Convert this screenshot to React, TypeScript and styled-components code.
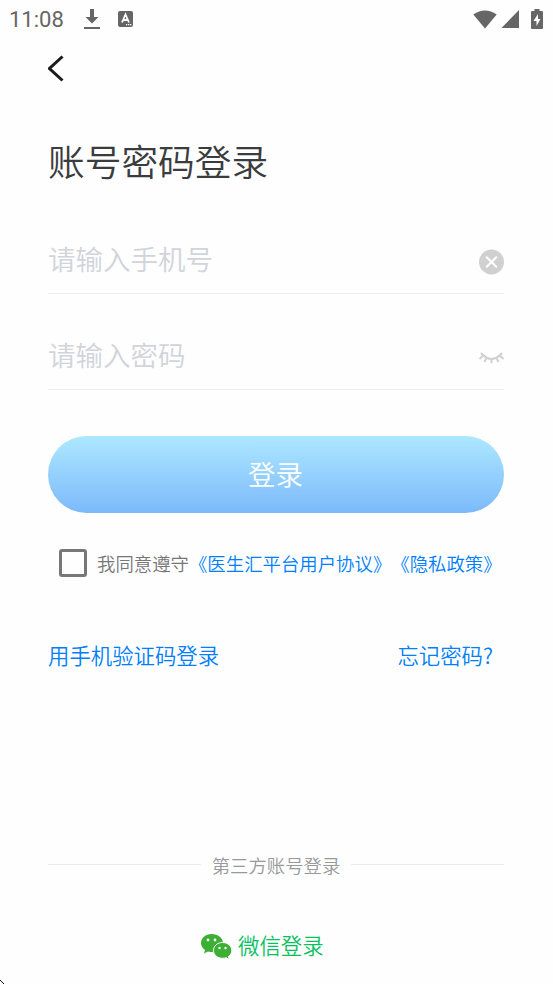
import React from 'react';
import styled, { createGlobalStyle } from 'styled-components';

const GlobalStyle = createGlobalStyle`
  * { box-sizing: border-box; }
  body {
    margin: 0;
    background: #fefefe;
    font-family: Roboto, 'Noto Sans CJK SC', sans-serif;
    font-weight: 350;
    text-spacing-trim: space-all;
  }
  button, input { font-family: inherit; font-weight: inherit; }
`;

const Screen = styled.main`
  position: relative;
  width: 553px;
  height: 984px;
  overflow: hidden;
  display: flex;
  flex-direction: column;
  background: #fefefe;
`;

const StatusBar = styled.header`
  height: 38px;
  flex: none;
  display: flex;
  align-items: center;
  justify-content: space-between;
  padding: 0 10px 0 9px;
  color: #666;
`;

const StatusGroup = styled.div`
  display: flex;
  align-items: center;
`;

const Clock = styled.span`
  width: 75px;
  font-size: 22px;
  font-weight: 400;
  line-height: 38px;
  padding-top: 1px;
`;

const Icon = styled.svg<{ $gap?: number }>`
  display: block;
  flex: none;
  margin-left: ${(p) => p.$gap ?? 0}px;
`;

const Content = styled.div`
  flex: 1;
  display: flex;
  flex-direction: column;
  padding: 0 49px 0 48px;
`;

const PlainButton = styled.button`
  border: 0;
  padding: 0;
  background: none;
  display: flex;
  align-items: center;
`;

const BackButton = styled(PlainButton)`
  height: 60px;
`;

const Title = styled.h1`
  margin: 39px 0 0;
  height: 51px;
  font-size: 36.7px;
  line-height: 54px;
  font-weight: 350;
  color: #3b3c3e;
`;

const Field = styled.label<{ $top: number }>`
  margin-top: ${(p) => p.$top}px;
  height: 68px;
  flex: none;
  display: flex;
  align-items: flex-start;
  justify-content: space-between;
  border-bottom: 1px solid #ededee;
`;

const Input = styled.input`
  flex: 1;
  min-width: 0;
  height: 67px;
  border: 0;
  padding: 1px 0 0;
  outline: 0;
  background: none;
  font-size: 27.5px;
  &::placeholder { color: #d1d4da; opacity: 1; }
`;

const FieldIcon = styled.span`
  height: 72px;
  display: flex;
  align-items: center;
`;

const LoginButton = styled.button`
  margin-top: 46px;
  height: 77px;
  flex: none;
  border: 0;
  border-radius: 39px;
  padding: 3px 1px 0 0;
  color: #fff;
  font-size: 27.5px;
  line-height: 40px;
  background: linear-gradient(180deg, #ade8ff, #7cb9fb);
`;

const Agreement = styled.label`
  margin: 35px 0 0 11px;
  height: 30px;
  flex: none;
  display: flex;
  align-items: center;
  white-space: nowrap;
  font-size: 18.4px;
  line-height: 30px;
  color: #777;
`;

const AgreementText = styled.span`
  padding-top: 3px;
`;

const Checkbox = styled.input`
  appearance: none;
  width: 28px;
  height: 28px;
  flex: none;
  margin: 0 10px 0 0;
  border: 3px solid #777;
  border-radius: 3px;
`;

const Accent = styled.span`
  color: #007eff;
`;

const LinkRow = styled.nav`
  margin-top: 61px;
  height: 32px;
  flex: none;
  display: flex;
  justify-content: space-between;
  padding-right: 11px;
`;

const TextLink = styled(PlainButton)`
  color: #007eff;
  font-family: 'Noto Sans CJK SC', sans-serif;
  font-size: 21.4px;
  line-height: 32px;
`;

const Divider = styled.div`
  margin-top: 179px;
  height: 30px;
  flex: none;
  display: flex;
  align-items: center;
  gap: 11px;
  font-size: 18.4px;
  line-height: 28px;
  padding: 0 0 1px;
  color: #97999c;
  &::before, &::after {
    content: '';
    flex: 1;
    height: 1px;
    background: #ededee;
  }
`;

const DividerText = styled.span`
  padding-top: 4px;
`;

const WechatButton = styled(PlainButton)`
  margin: 51px 0 0 153px;
  height: 32px;
  gap: 6px;
  color: #07c160;
  font-size: 21.4px;
  line-height: 32px;
`;

const Corner = styled(Icon)`
  position: absolute;
  left: 0;
  bottom: 0;
`;

export default function App() {
  return (
    <Screen lang="zh-CN">
      <GlobalStyle />
      <StatusBar>
        <StatusGroup>
          <Clock>11:08</Clock>
          <Icon width="16" height="22" viewBox="0 0 16 22" fill="#666">
            <path d="M6 1h4v8h4.500L8 15.500 1.500 9H6zM0 19h16v2H0z" />
          </Icon>
          <Icon $gap={18} width="15" height="16" viewBox="0 0 15 16">
            <rect width="15" height="16" rx="2" fill="#666" />
            <path d="M4 11.500 7.500 3.500 11 11.500M5.400 9h4.200" fill="none" stroke="#fff" strokeWidth="1.800" />
            <path d="M8 13h1.300v1.300H8zM10 13h1.300v1.300H10zM12 13h1.300v1.300H12z" fill="#fff" />
          </Icon>
        </StatusGroup>
        <StatusGroup>
          <Icon width="24" height="19" viewBox="0 0 24 19" fill="#666">
            <path d="M12 18.500.3 4.500Q12-3.500 23.700 4.500z" />
          </Icon>
          <Icon $gap={4} width="18" height="18" viewBox="0 0 18 18" fill="#666">
            <path d="M18 0v18H.5z" />
          </Icon>
          <Icon $gap={12} width="12" height="20" viewBox="0 0 12 20">
            <path d="M3.500 0h5v2H11q1 0 1 1v16q0 1-1 1H1q-1 0-1-1V3q0-1 1-1h2.500z" fill="#666" />
            <path d="M7 5 2.500 12H5.500v5L9.500 10H7z" fill="#fff" />
          </Icon>
        </StatusGroup>
      </StatusBar>
      <Content>
        <BackButton aria-label="返回">
          <Icon width="16" height="28" viewBox="0 0 16 28" fill="none" stroke="#1b1b1b" strokeWidth="3">
            <path d="M14.500 2.500 1.500 14.500l13 12" />
          </Icon>
        </BackButton>
        <Title>账号密码登录</Title>
        <Field $top={38}>
          <Input placeholder="请输入手机号" />
          <FieldIcon>
            <Icon width="25" height="26" viewBox="0 0 25 26">
              <circle cx="12.500" cy="13" r="12.500" fill="#d0d0d0" />
              <path d="m7.700 8.200 9.600 9.600m0-9.600-9.600 9.600" stroke="#fff" strokeWidth="2" strokeLinecap="round" />
            </Icon>
          </FieldIcon>
        </Field>
        <Field $top={28}>
          <Input type="password" placeholder="请输入密码" />
          <FieldIcon>
            <Icon width="25" height="12" viewBox="0 0 25 12" fill="none" stroke="#d0d0d0" strokeWidth="2" strokeLinecap="round">
              <path d="M2.500 1.500q10 11 20 0M4 3.500 1.200 6.500M7.500 6 5.800 9.200M12.500 7v3.500M17.500 6l1.700 3.200M21 3.500l2.800 3" />
            </Icon>
          </FieldIcon>
        </Field>
        <LoginButton>登录</LoginButton>
        <Agreement>
          <Checkbox type="checkbox" />
          <AgreementText>
            我同意遵守<Accent>《医生汇平台用户协议》《隐私政策》</Accent>
          </AgreementText>
        </Agreement>
        <LinkRow>
          <TextLink>用手机验证码登录</TextLink>
          <TextLink>忘记密码?</TextLink>
        </LinkRow>
        <Divider><DividerText>第三方账号登录</DividerText></Divider>
        <WechatButton>
          <Icon width="31" height="26" viewBox="0 0 31 26">
            <path d="M10.500 0C4.500 0 0 4 0 9c0 3 1.500 5.200 4 7l-1 3.500L7 17.500c8 2 15-2 15-8.500 0-5-5-9-11.500-9z" fill="#3cb035" />
            <path d="M21.500 8.500c-5.300 0-9 3.500-9 8s4 7.800 9 7.800c1.300 0 2.400-.2 3.500-.6l3.200 1.800-.8-3c2.200-1.500 3.400-3.500 3.400-6 0-4.500-4-8-9.300-8z" fill="#3cb035" stroke="#fefefe" strokeWidth="1" />
            <circle cx="7" cy="6" r="1.400" fill="#fff" />
            <circle cx="14" cy="6" r="1.400" fill="#fff" />
            <circle cx="18.500" cy="14" r="1.200" fill="#fff" />
            <circle cx="24.500" cy="14" r="1.200" fill="#fff" />
          </Icon>
          微信登录
        </WechatButton>
      </Content>
      <Corner width="4" height="4" viewBox="0 0 4 4" fill="#111">
        <path d="M0 0h1v1H0zM1 1h1v1H1zM2 2h1v1H2zM3 3h1v1H3z" />
      </Corner>
    </Screen>
  );
}
